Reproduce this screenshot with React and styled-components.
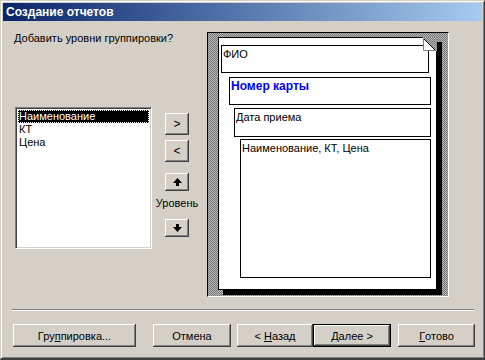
import React from 'react';
import styled, { createGlobalStyle } from 'styled-components';

const face = '#d4d0c8';
const shadow = '#808080';
const darkShadow = '#404040';

const GlobalStyle = createGlobalStyle`
  html, body { margin: 0; padding: 0; background: ${face}; }
  * { box-sizing: border-box; }
`;

const Window = styled.div`
  width: 485px;
  height: 360px;
  background: ${face};
  border-top: 1px solid ${face};
  border-left: 1px solid ${face};
  border-right: 1px solid ${darkShadow};
  border-bottom: 2px solid ${darkShadow};
  box-shadow: inset 1px 1px #fff, inset -1px -1px ${shadow};
  padding: 2px;
  font-family: 'Liberation Sans', Arial, sans-serif;
  font-size: 11px;
  color: #000;
  display: flex;
  flex-direction: column;
`;

const TitleBar = styled.div`
  height: 18px;
  background: linear-gradient(to right, #0a246a, #a6caf0);
  color: #fff;
  font-weight: bold;
  font-size: 12px;
  line-height: 18px;
  padding-left: 3px;
`;

const Main = styled.div`
  display: flex;
  padding: 11px 0 0 11px;
`;

const LeftColumn = styled.div`
  width: 193px;
  display: flex;
  flex-direction: column;
`;

const Prompt = styled.div`
  line-height: 13px;
  height: 13px;
`;

const ListRow = styled.div`
  display: flex;
  align-items: flex-start;
  margin-top: 62px;
  padding-left: 1px;
`;

const ListBox = styled.div`
  width: 137px;
  height: 142px;
  background: #fff;
  border-top: 1px solid ${shadow};
  border-left: 1px solid ${shadow};
  border-right: 1px solid #fff;
  border-bottom: 1px solid #fff;
  box-shadow: inset 1px 1px ${darkShadow}, inset -1px -1px ${face};
  padding: 2px;
`;

const ListItem = styled.div`
  height: 13px;
  line-height: 13px;
  padding-left: 1px;
  background: ${p => (p.$selected ? '#000' : 'transparent')};
  color: ${p => (p.$selected ? '#fff' : '#000')};
  outline: ${p => (p.$selected ? '1px dotted #fff' : 'none')};
  outline-offset: -1px;
`;

const LevelColumn = styled.div`
  width: 46px;
  margin-left: 2px;
  padding-top: 6px;
  display: flex;
  flex-direction: column;
  align-items: center;
`;

const SmallButton = styled.div`
  width: 24px;
  height: ${p => p.$h}px;
  margin-top: ${p => p.$mt}px;
  display: flex;
  align-items: center;
  justify-content: center;
  font-size: 12px;
  background: ${face};
  box-shadow: inset -1px -1px ${darkShadow}, inset 1px 1px #fff, inset -2px -2px ${shadow};
`;

const LevelLabel = styled.div`
  margin-top: 6px;
  line-height: 13px;
  height: 13px;
`;

const Preview = styled.div`
  width: 242px;
  height: 265px;
  border-top: 1px solid #000;
  border-left: 1px solid #000;
  border-right: 1px solid #fff;
  border-bottom: 1px solid #fff;
  background: repeating-conic-gradient(#7a7a7a 0 25%, #b4b4b4 0 50%) 0 0 / 2px 2px;
  padding: 4px 0 0 10px;
`;

const Page = styled.div`
  position: relative;
  width: 219px;
  height: 253px;
  background: #fff;
  border: 1px solid #000;
  box-shadow: 5px 5px 0 #000;
  padding: 7px 0 0 2px;
  display: flex;
  flex-direction: column;
`;

const Fold = styled.svg`
  position: absolute;
  top: -1px;
  right: -1px;
`;

const Field = styled.div`
  width: ${p => p.$w}px;
  height: ${p => p.$h}px;
  margin-left: ${p => p.$ml}px;
  margin-top: ${p => p.$mt}px;
  border: 1px solid #000;
  padding: 2px 1px;
  line-height: 13px;
  color: ${p => (p.$bold ? '#0000ff' : '#000')};
  font-weight: ${p => (p.$bold ? 'bold' : 'normal')};
  font-size: ${p => (p.$bold ? '12px' : '11px')};
`;

const Footer = styled.div`
  margin-top: 12px;
  display: flex;
  flex-direction: column;
`;

const Separator = styled.div`
  margin: 0 8px 0 9px;
  height: 2px;
  border-top: 1px solid ${shadow};
  border-bottom: 1px solid #fff;
`;

const ButtonRow = styled.div`
  display: flex;
  margin-top: 13px;
  padding-left: 10px;
`;

const Button = styled.div`
  width: ${p => p.$w}px;
  height: 23px;
  margin-left: ${p => p.$ml || 0}px;
  display: flex;
  align-items: center;
  justify-content: center;
  background: ${face};
  border: ${p => (p.$default ? '1px solid #000' : 'none')};
  box-shadow: inset -1px -1px ${darkShadow}, inset 1px 1px #fff, inset -2px -2px ${shadow};
  white-space: pre;
  u { text-decoration: underline; }
`;

const Arrow = ({ down }) => (
  <svg width="9" height="8" viewBox="0 0 9 8">
    <path
      d={down ? 'M3 0 H6 V3 H9 L4.5 8 L0 3 H3 Z' : 'M4.5 0 L9 5 H6 V8 H3 V5 H0 Z'}
      fill="#000"
    />
  </svg>
);

const App = () => (
  <Window>
    <GlobalStyle />
    <TitleBar>Создание отчетов</TitleBar>
    <Main>
      <LeftColumn>
        <Prompt>Добавить уровни группировки?</Prompt>
        <ListRow>
          <ListBox>
            <ListItem $selected>Наименование</ListItem>
            <ListItem>КТ</ListItem>
            <ListItem>Цена</ListItem>
          </ListBox>
          <LevelColumn>
            <SmallButton $h={22} $mt={0}>&gt;</SmallButton>
            <SmallButton $h={22} $mt={5}>&lt;</SmallButton>
            <SmallButton $h={18} $mt={11}><Arrow /></SmallButton>
            <LevelLabel>Уровень</LevelLabel>
            <SmallButton $h={18} $mt={9}><Arrow down /></SmallButton>
          </LevelColumn>
        </ListRow>
      </LeftColumn>
      <Preview>
        <Page>
          <Fold width="15" height="15" viewBox="0 0 15 15">
            <defs>
              <pattern id="chk" width="2" height="2" patternUnits="userSpaceOnUse">
                <rect width="2" height="2" fill="#b4b4b4" />
                <rect width="1" height="1" fill="#7a7a7a" />
                <rect x="1" y="1" width="1" height="1" fill="#7a7a7a" />
              </pattern>
            </defs>
            <polygon points="0,0 15,0 15,15" fill="url(#chk)" />
            <polygon points="1,1 14,14 1,14" fill="#fff" />
            <line x1="0.5" y1="0.5" x2="14.5" y2="14.5" stroke="#000" />
            <polyline points="1.5,1 1.5,13.5 14,13.5" fill="none" stroke={shadow} />
          </Fold>
          <Field $w={208} $h={28} $ml={0} $mt={0}>ФИО</Field>
          <Field $w={202} $h={28} $ml={8} $mt={4} $bold>Номер карты</Field>
          <Field $w={197} $h={29} $ml={13} $mt={3}>Дата приема</Field>
          <Field $w={191} $h={139} $ml={19} $mt={2}>Наименование, КТ, Цена</Field>
        </Page>
      </Preview>
    </Main>
    <Footer>
      <Separator />
      <ButtonRow>
        <Button $w={123}>Гру<u>п</u>пировка...</Button>
        <Button $w={78} $ml={17}>Отмена</Button>
        <Button $w={76} $ml={6}>&lt; <u>Н</u>азад</Button>
        <Button $w={78} $default><u>Д</u>алее &gt;</Button>
        <Button $w={77} $ml={7}><u>Г</u>отово</Button>
      </ButtonRow>
    </Footer>
  </Window>
);

export default App;
